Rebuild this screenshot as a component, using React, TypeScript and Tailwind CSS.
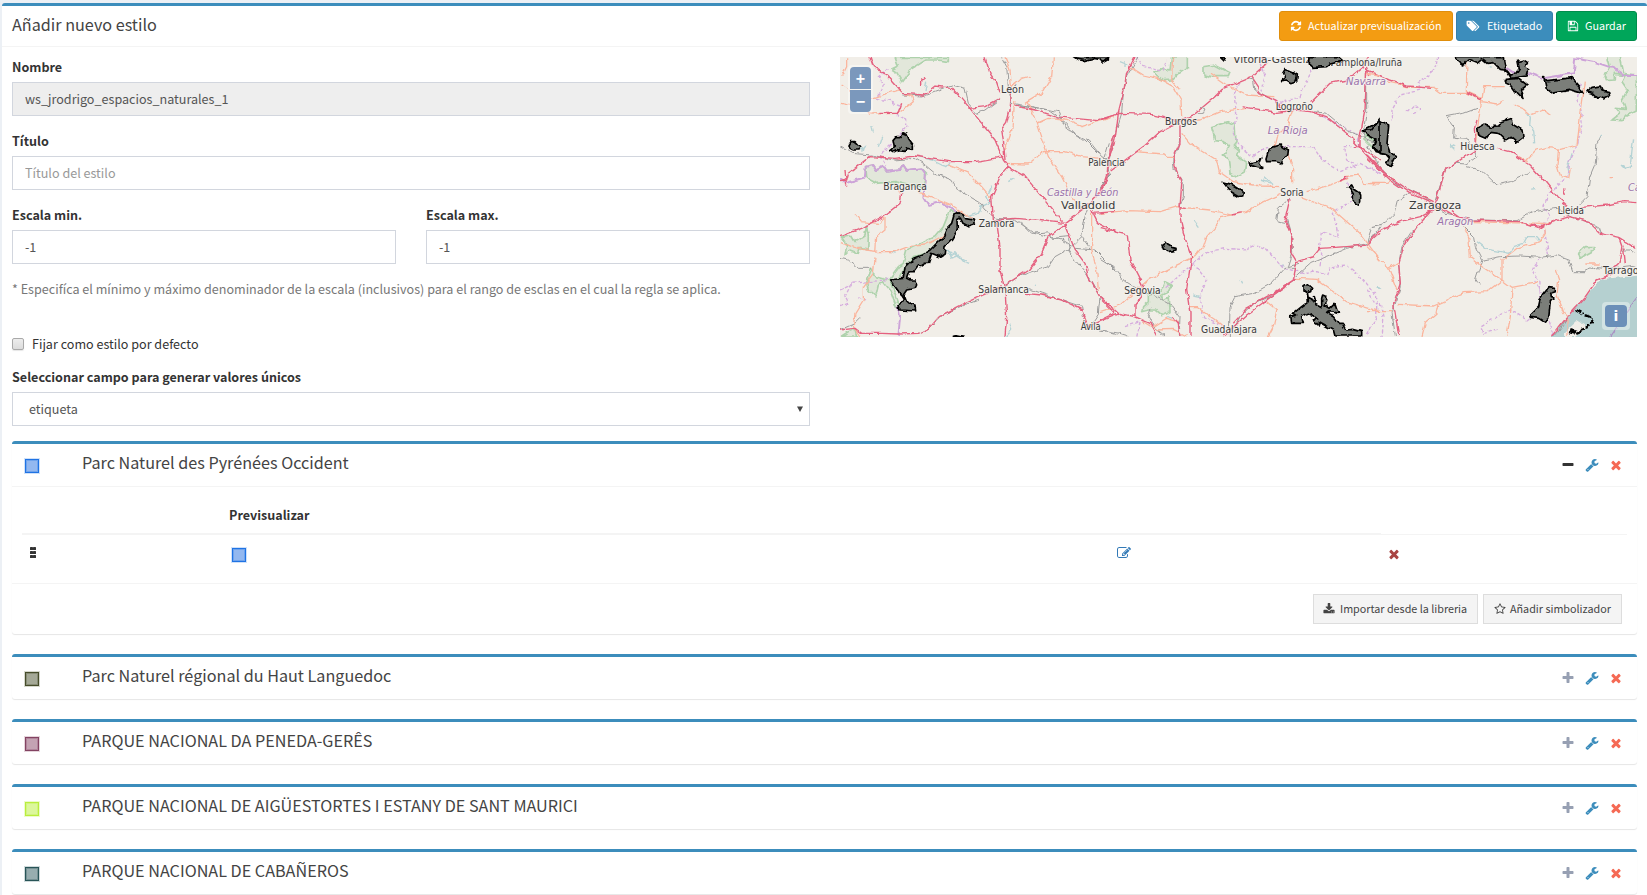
import React from "react";

const ICONS = {
  refresh:
    "M1639 1056q0 5-1 7-64 268-268 434.5t-478 166.5q-146 0-282.5-55t-243.5-157l-129 129q-19 19-45 19t-45-19-19-45v-448q0-26 19-45t45-19h448q26 0 45 19t19 45-19 45l-137 137q71 66 161 102t187 36q134 0 250-65t186-179q11-17 53-117 8-23 30-23h192q13 0 22.5 9.5t9.5 22.5zm25-800v448q0 26-19 45t-45 19h-448q-26 0-45-19t-19-45 19-45l138-138q-148-137-349-137-134 0-250 65t-186 179q-11 17-53 117-8 23-30 23h-199q-13 0-22.5-9.5t-9.5-22.5v-7q65-268 270-434.5t480-166.5q146 0 284 55.5t245 156.5l130-129q19-19 45-19t45 19 19 45z",
  tags: "M384 448q0-53-37.5-90.5t-90.5-37.5-90.5 37.5-37.5 90.5 37.5 90.5 90.5 37.5 90.5-37.5 37.5-90.5zm1067 576q0 53-37 90l-491 492q-39 37-91 37-53 0-90-37l-715-716q-38-37-64.5-101t-26.5-117v-416q0-52 38-90t90-38h416q53 0 117 26.5t102 64.5l715 714q37 39 37 91zm384 0q0 53-37 90l-491 492q-39 37-91 37-36 0-59-14t-53-45l470-470q37-37 37-90 0-52-37-91l-715-714q-38-38-102-64.5t-117-26.5h224q53 0 117 26.5t102 64.5l715 714q37 39 37 91z",
  floppy:
    "M512 1536h768v-384h-768v384zm896 0h128v-896q0-14-10-38.5t-20-34.5l-281-281q-10-10-34-20t-39-10v416q0 40-28 68t-68 28h-576q-40 0-68-28t-28-68v-416h-128v1280h128v-416q0-40 28-68t68-28h832q40 0 68 28t28 68v416zm-384-928v-320q0-13-9.5-22.5t-22.5-9.5h-192q-13 0-22.5 9.5t-9.5 22.5v320q0 13 9.5 22.5t22.5 9.5h192q13 0 22.5-9.5t9.5-22.5zm640 32v928q0 40-28 68t-68 28h-1344q-40 0-68-28t-28-68v-1344q0-40 28-68t68-28h928q40 0 88 20t76 48l280 280q28 28 48 76t20 88z",
  times:
    "M1490 1322q0 40-28 68l-136 136q-28 28-68 28t-68-28l-294-294-294 294q-28 28-68 28t-68-28l-136-136q-28-28-28-68t28-68l294-294-294-294q-28-28-28-68t28-68l136-136q28-28 68-28t68 28l294 294 294-294q28-28 68-28t68 28l136 136q28 28 28 68t-28 68l-294 294 294 294q28 28 28 68z",
  plus: "M1600 736v192q0 40-28 68t-68 28h-416v416q0 40-28 68t-68 28h-192q-40 0-68-28t-28-68v-416h-416q-40 0-68-28t-28-68v-192q0-40 28-68t68-28h416v-416q0-40 28-68t68-28h192q40 0 68 28t28 68v416h416q40 0 68 28t28 68z",
  minus: "M1600 736v192q0 40-28 68t-68 28h-1216q-40 0-68-28t-28-68v-192q0-40 28-68t68-28h1216q40 0 68 28t28 68z",
  wrench:
    "M448 1472q0-26-19-45t-45-19-45 19-19 45 19 45 45 19 45-19 19-45zm644-420l-682 682q-37 37-90 37-52 0-91-37l-106-108q-38-36-38-90 0-53 38-91l681-681q39 98 114.5 173.5t173.5 114.5zm634-435q0 39-23 106-47 134-164.5 217.5t-258.5 83.5q-185 0-316.5-131.5t-131.5-316.5 131.5-316.5 316.5-131.5q58 0 121.5 16.5t107.5 46.5q16 11 16 28t-16 28l-293 169v224l193 107q5-3 79-48.5t135.5-81 70.5-35.5q15 0 23.5 10t8.5 25z",
  edit: "M888 1184l116-116-152-152-116 116v56h96v96h56zm440-720q-16-16-33 1l-350 350q-17 17-1 33t33-1l350-350q17-17 1-33zm80 594v190q0 119-84.5 203.5t-203.5 84.5h-832q-119 0-203.5-84.5t-84.5-203.5v-832q0-119 84.5-203.5t203.5-84.5h832q63 0 117 25 15 7 18 23 3 17-9 29l-49 49q-14 14-32 8-23-6-45-6h-832q-66 0-113 47t-47 113v832q0 66 47 113t113 47h832q66 0 113-47t47-113v-126q0-13 9-22l64-64q15-15 35-7t20 29zm-96-738l288 288-672 672h-288v-288zm444 132l-92 92-288-288 92-92q28-28 68-28t68 28l152 152q28 28 28 68t-28 68z",
  download:
    "M1344 1344q0-26-19-45t-45-19-45 19-19 45 19 45 45 19 45-19 19-45zm256 0q0-26-19-45t-45-19-45 19-19 45 19 45 45 19 45-19 19-45zm128-224v320q0 40-28 68t-68 28h-1472q-40 0-68-28t-28-68v-320q0-40 28-68t68-28h465l135 136q58 56 136 56t136-56l136-136h464q40 0 68 28t28 68zm-325-569q17 41-14 70l-448 448q-18 19-45 19t-45-19l-448-448q-31-29-14-70 17-39 59-39h256v-448q0-26 19-45t45-19h256q26 0 45 19t19 45v448h256q42 0 59 39z",
  star: "M1201 1004l306-297-422-62-189-382-189 382-422 62 306 297-73 421 378-199 377 199zm527-357q0 22-26 48l-363 354 86 500q1 7 1 20 0 50-41 50-19 0-40-12l-449-236-449 236q-22 12-40 12-21 0-31.5-14.5t-10.5-35.5q0-6 2-20l86-500-364-354q-25-27-25-48 0-37 56-46l502-73 225-455q19-41 49-41t49 41l225 455 502 73q56 9 56 46z",
};

function Icon({ name, size = 14, className = "" }: { name: keyof typeof ICONS; size?: number; className?: string }) {
  return (
    <svg width={size} height={size} viewBox="0 0 1792 1792" fill="currentColor" className={"shrink-0 overflow-visible " + className}>
      <path d={ICONS[name]} />
    </svg>
  );
}

const RED = "#e5607f";
const ORANGE = "#fbb49c";
const GREY = "#9c9c9c";
const PURPLE = "#d6acde";

type Sheet = {
  dx: number;
  water?: string;
  green?: string;
  grey?: string;
  orange?: string;
  red?: string;
  dashed?: string;
  border?: string;
  parks?: string;
  labels: [string, number, number, number, number?][];
  regions: [string, number, number, number][];
};

const SHEETS: Sheet[] = [
  {
    dx: 527,
    water:
      "M482 190L490 205 488 225 500 240 503 280M765 345L775 355 790 350 795 300 800 265M330 575L360 598 400 605 425 610 440 590 470 580 480 560 510 560 520 572M605 375L600 350 610 330 615 310M365 50L372 52M250 285L262 298M252 295L265 287M490 418L504 416M30 710L42 718M695 265L705 255",
    green:
      "M718 18L760 18 770 70 808 75 808 180 780 195 765 212 735 210 760 190 748 175 775 178 765 150 782 120 765 95 775 75 745 70 745 90 718 92 710 70 728 55ZM635 610L655 590 680 590 682 600 655 615 640 625ZM0 255L20 270 30 290 10 285Z",
    grey:
      "M0 285L40 355 90 400 160 435 240 490 320 510 450 512 500 485 570 475 610 500 665 515 700 535 705 550M205 450L235 360 265 340 300 342 330 320 320 295 300 265 260 262 262 230 240 200 290 190 330 175M300 350L345 362 390 405 430 395 485 370M635 465L660 440 668 380 685 340 690 275 700 258M130 425L95 450 85 490 55 520 15 530 0 575M290 530L320 560 325 590 345 630 325 690 340 703M340 632L400 620 460 618 520 622 570 615 605 628 618 665 650 665 690 650 750 655 808 648M605 795L580 835 560 858M85 858L75 790 100 710 95 640 105 590 130 550 150 530M765 600L790 600 808 610",
    orange:
      "M60 95L130 112 200 112 225 130 300 130 345 150M300 18L298 125 345 145 335 210 325 285M345 150L350 110 410 110M345 155L390 162 410 152M440 165L470 178 490 195 530 180 550 195M480 330L510 300 540 292 580 298 630 285 640 200 655 95M575 295L570 345 580 380 605 385 610 355M455 320L485 335M320 515L420 518 530 520 560 515M530 525L535 550 520 575 450 595 405 630 405 690 435 712 500 700 510 690M290 530L305 560 310 620 345 650 405 690 360 725 290 728 200 768 95 763M215 765L210 790 175 820 165 858M435 715L430 800 420 858M0 400L60 400 80 385M0 590L65 655 95 635M65 655L90 720M0 785L80 785M565 660L575 690 570 735 590 790 600 800 600 858M725 380L735 380M655 642L695 642",
    red:
      "M0 60L70 90 120 108 195 115M300 128L345 150M330 210L322 240 325 280M0 315L60 375 125 420 200 455M0 325L70 390 125 428 200 462M205 460L235 360 270 335 325 300M390 295L430 305 490 345 530 390 570 440 605 470M645 472L720 465 770 455 808 458M205 462L260 495 310 510 460 515 520 530 590 505 610 500 665 515 700 550 755 562 808 595M205 475L160 500 100 515 40 540 0 580M190 485L150 530 110 590 95 640 100 700 80 760 95 858M755 562L765 590 755 640 740 655M740 670L690 690 655 740 605 795 555 858M460 515L520 535 560 510M770 595L775 640M590 415L595 435M255 482L280 500M0 55L5 75",
    dashed:
      "M215 18L210 50 155 100 160 120 100 135 75 180 72 215M120 185L140 165 160 180 135 190M640 100L630 150 645 180 645 220 630 290 605 340 600 380 560 420 545 430 530 470 550 500 530 520 545 620M520 625L495 655 515 690 520 735 540 790 560 858M500 795L480 810 430 780 400 795 340 830 350 850 390 840M0 350L30 370 50 360M0 720L20 760 40 760 50 810 45 858M500 690L530 740",
    border: "M410 50L450 75 490 70 530 85 620 70 625 25 680 35 740 55 770 75 808 75",
    parks:
      "M265 20L275 35 290 45 305 30 330 40 345 28 360 40 380 38 400 58 415 60 430 85 455 82 480 78 485 60 475 50 482 38 470 30 450 35 455 58 445 72 430 75 415 55 408 20ZM415 88L455 85 480 105 468 115 460 118 468 148 450 130 435 108 418 100ZM530 80L540 92 600 85 612 83 640 115 648 130 605 118 565 125 550 128 538 118 535 100ZM660 125L675 112 700 108 705 120 725 125 728 140 712 147 700 142 690 145 675 130ZM0 240L12 250 35 230 18 290 28 305 55 310 68 325 58 340 70 352 88 318 72 310 60 280 65 225 37 210 28 220 0 235ZM332 235L355 222 370 230 395 228 405 215 435 205 440 225 465 240 468 262 448 277 430 262 415 270 395 250 370 247 358 265 335 255ZM520 745L545 713 562 715 562 725 548 730 550 740 562 742 550 755 545 805 530 815 515 805 490 802 488 795 515 768Z",
    labels: [
      ["Huesca", 280, 300, 103],
      ["Zaragoza", 126, 478, 157, 34],
      ["Lleida", 572, 492, 79],
      ["Tarrago", 708, 673, 107],
    ],
    regions: [
      ["Aragón", 211, 524, 108],
      ["Ca", 783, 423, 38],
    ],
  },
  {
    dx: 260,
    water:
      "M60 35L85 45M75 30L75 48M480 390L515 400 495 380 490 395M280 510L295 530M280 735L300 740M200 800L220 805M830 710L838 715M540 645L550 650M420 690L425 700",
    green:
      "M162 65L190 55 210 60 215 18 262 18 262 50 235 70 215 90 190 92 175 80ZM312 50L345 45 390 68 385 80 330 80 312 75ZM335 230L385 215 405 225 408 275 400 285 418 300 412 318 440 340 435 370 410 382 390 370 385 325 370 315 385 290 370 275 345 272ZM165 730L185 720 195 695 215 705 205 725 185 735 190 750 208 740 210 785 185 797 165 780 145 780 125 785 128 770 145 755 145 735ZM795 255L825 275 820 295 795 270Z",
    grey:
      "M115 18L80 80 70 130 65 190 40 270 25 340 30 370 0 415M240 260L235 300 218 325 222 355 250 400 250 440 240 470M440 85L460 90 465 120 510 145M640 185L680 190 740 240 840 285M570 445L535 475 530 515 555 520M0 625L40 650 70 690 110 715 180 745 215 765 240 800 238 858M585 655L555 655 515 700 460 730 405 740 390 770 388 858M585 690L520 735 450 770 420 800 400 840M585 680L630 640 680 620 740 595 800 580 825 550 840 530M560 510L575 560 578 610 565 650 600 640M290 190L310 190 315 180 300 172M155 770L145 800 160 830 195 858M0 840L60 850 85 858M790 260L800 200 800 110M0 405L35 370",
    orange:
      "M90 50L130 75 175 85 220 110 243 150 245 200M218 18L215 90 240 120M330 70L380 105 440 135 520 140M245 212L300 210 360 185 440 175M245 250L270 280 350 330 358 365 400 395 480 408 545 410M578 180L565 220 560 250M525 290L535 250 560 230M560 305L578 350 578 400M620 425L680 408 745 385M600 440L700 480 780 550 840 630M110 305L190 312 200 322 225 322M0 490L80 482 180 485 230 470 330 480 395 495 435 488 490 455 545 430M395 495L360 500 355 520 320 560 310 590 285 620 220 650 150 685 60 765M60 765L0 785M590 685L650 688 700 725 740 755 840 785M270 770L290 770 330 800 345 810 370 830M500 755L530 780 520 830 505 858M735 380L775 375 790 400 840 402M130 815L170 840 220 838 260 858M160 830L200 805 235 815M800 70L840 75",
    red:
      "M0 208L60 190 150 193 235 212 280 195 340 145 370 115 455 80 500 40 480 18M105 20L80 70 70 130 55 190 45 270 25 330 20 390 0 420M240 215L240 280 222 320 225 350 245 400 240 470 240 500 250 550 275 620 260 720 270 790 270 858M240 215L180 245 130 290 90 320 35 360M455 80L475 110 470 125 530 155 545 185M425 170L530 187 590 180 630 185 680 200 740 250 840 360M635 155L690 100 740 90 790 50 810 18M800 50L795 180 780 260 780 290 840 330M0 535L40 545 82 555 90 630 130 710 125 740 105 765 105 800 55 790 0 740M0 815L60 790 105 800 150 820 170 858M570 445L555 510 575 560 575 610 590 635 640 620 660 595 740 590 800 585 840 550M590 635L580 690 520 730 440 775 400 820M590 685L500 750 440 795 370 858M395 495L425 488M235 470L260 472M720 393L740 385 740 378M220 800L235 820 240 858M765 290L785 290",
    dashed:
      "M110 20L130 50 190 60 200 30M480 40L495 80 480 130 540 160 600 140 620 95 640 50M420 95L400 130 410 190 400 250 420 290 460 320 500 290 580 290 640 290 665 330 720 365 780 340 840 370M670 200L770 250 780 290 730 290 740 330 770 350M740 395L760 450 700 490 715 560 665 545 655 590 665 610 660 650M280 640L320 605 380 595 440 600 460 585 500 600 550 655 620 670 650 665 680 675 690 650 740 645 780 680 830 740 830 800 800 858M280 640L320 690 300 740 310 800 370 830M75 830L120 815 110 858M200 710L280 640",
    parks:
      "M0 20L25 20 25 30 10 38 0 32ZM362 20L378 20 372 30ZM548 70L555 58 580 68 592 75 590 92 572 98 560 90 542 92 555 82ZM630 20L718 20 720 35 690 42 680 50 640 52 628 42ZM498 328L508 295 540 285 550 293 562 298 560 315 545 340 530 335 500 335ZM448 340L470 335 485 322 478 340 488 355 470 352 452 345ZM370 396L395 403 415 415 430 430 428 438 415 440 390 425 380 410ZM744 410L752 405 760 420 782 435 782 455 775 465 760 455 760 435ZM186 585L195 580 215 592 228 595 228 600 205 605 190 597ZM790 240L815 240 840 205 840 310 820 290 828 270 800 255ZM612 710L625 703 635 712 632 725 622 728 625 745 645 755 640 740 645 760 665 770 665 745 668 735 680 740 680 755 675 765 690 775 705 760 710 775 715 790 690 785 680 790 700 800 715 820 730 820 740 840 760 838 785 845 785 858 705 858 700 840 655 815 655 825 640 815 650 805 625 790 605 800 610 820 575 820 572 800 590 795 580 790 605 770 625 755 622 728 612 720Z",
    labels: [
      ["Vitoria-Gasteiz", 400, 38, 233, 33],
      ["Pamplona/Iruña", 692, 48, 214],
      ["Logroño", 527, 180, 112],
      ["Burgos", 195, 224, 96],
      ["Palencia", -35, 347, 109],
      ["Soria", 541, 437, 70],
      ["Segovia", 73, 733, 109],
      ["Guadalajara", 303, 848, 168],
    ],
    regions: [
      ["Navarra", 738, 104, 120],
      ["La Rioja", 503, 251, 120],
    ],
  },
  {
    dx: -5,
    water:
      "M250 320L290 330 320 345 335 350 345 340M330 600L350 605 370 620 390 630M335 610L355 625M340 600L345 615 360 605 385 635 400 640M345 625L375 615M470 410L455 440 470 455 440 470 430 490 400 500M515 858L530 840 525 820M170 605L182 610M110 225L115 245M75 300L90 285M520 395L535 385M270 120L275 95M80 305L85 290M385 490L410 505M600 705L606 708M130 290L140 260",
    green:
      "M180 22L340 22 340 35 310 30 270 30 230 55 200 95 185 70 170 60 190 50ZM92 350L115 345 125 360 145 350 155 365 195 360 205 345 215 360 260 355 275 370 268 395 265 410 220 405 180 395 125 400 95 385ZM345 480L370 490 355 525 325 560 300 600 270 610 235 620 210 650 190 690 165 690 195 770 185 775 165 720 145 695 130 705 122 740 100 720 95 695 110 655 122 680 160 690 190 650 205 640 215 600 260 580 300 560 325 530ZM20 562L50 558 60 575 90 555 95 525 100 560 98 600 75 595 70 610 45 600 30 615 35 585ZM40 845L60 838 65 858 20 858Z",
    grey:
      "M500 22L515 50 520 110 530 160 590 170 640 180 680 210 720 250 760 270 800 320 838 340M545 165L620 175 670 185 690 230 750 270 790 310M205 135L260 138 350 105 390 115 400 160 425 190 450 180 490 150M15 290L50 310 110 315 175 330 240 325 270 345 300 370 350 390 370 420 430 455 450 480 485 505 540 510 600 550 680 570 720 595 780 600 840 660M555 515L590 550 645 545 650 565 700 560 705 595 660 620 640 650 590 665 550 680 510 708M580 715L620 730 680 750 740 770 745 800M760 470L750 500 740 560 700 600 720 630 765 685 795 740 790 790 770 820M740 560L765 595M15 625L40 630 70 655 110 655M75 805L60 820 15 840M250 850L280 835 320 795 390 765 430 750M390 15L385 18M800 840L840 850M820 280L805 330 830 320",
    orange:
      "M35 25L35 50 20 80M20 105L60 135 110 145 190 120 230 140 235 155 190 190 100 192 90 175 15 160M655 22L650 80 620 130 570 160M530 110L550 95 560 85 585 78M575 155L600 200 620 260 640 320 680 380 710 440 745 480M605 220L640 205 690 210 740 230 770 220 840 200M510 340L580 342 625 305 690 305 740 320 800 325M340 345L400 370 440 410 470 445M250 430L290 440 350 465 410 505M60 490L80 515 130 520 150 500M150 500L150 540 125 560 122 608M15 575L50 590 90 600 130 605 180 605 220 590 270 585 320 560 340 540M120 625L115 670 85 710 85 750 60 790 55 830 75 858M195 430L180 400M770 490L770 600 785 660 790 720M540 150L530 240 510 300M500 715L530 720M510 22L525 60 530 120",
    red:
      "M105 20L115 50 160 80 205 130 265 135 300 108 350 115 375 140 405 175 440 220 480 270 505 330 520 350 570 380 620 440 680 515M450 22L465 70 485 100 495 130M530 120L525 180 515 220 500 240 505 270 510 330M400 175L450 170 495 145M540 168L600 180 660 200 790 212 840 195M15 395L35 390 40 370 105 320 180 325 240 318 340 335 420 335 505 320M520 350L495 380 470 440 475 510M475 510L540 505 600 510 690 520 740 480 800 420 825 345 825 300 840 250M485 515L495 590 495 660 510 720 515 800 510 858M15 560L80 535 150 495 195 460 200 430M75 850L140 850 190 852 250 850 280 835 310 800 400 755 500 710M510 705L580 660 620 610 640 560 690 525 720 600 750 640 760 680 800 750 840 790M570 730L620 735 680 750 740 780 760 830 840 790M770 480L790 520 840 545M770 490L840 485M15 840L60 835 80 850M200 160L190 190 130 190M260 108L260 90 272 85M30 360L35 410",
    dashed:
      "M160 55L130 80 145 105 125 145 165 155 195 165 190 195 215 210 215 230 180 270 150 300 135 320 155 350M15 770L40 760 30 740 50 700 100 695 150 690 160 685M15 720L60 700M70 740L90 750",
    border:
      "M15 385L30 400 90 382 92 350 115 345 125 360 145 350 155 365 195 360 205 345 215 360 260 355 272 372 272 400 265 440 280 465 320 455 350 475 370 490M190 770L195 800 190 858",
    parks:
      "M42 285L48 275 60 275 74 290 72 300 55 300 45 295ZM165 298L178 288 174 272 185 260 198 260 204 248 216 253 222 268 235 285 235 298 215 295 210 307 190 305 195 295 178 305ZM358 492L372 485 385 492 392 506 415 510 418 522 400 528 384 520 376 504 366 510 367 540 350 570 330 590 328 612 315 620 290 610 280 640 270 640 255 650 250 645 235 665 222 665 215 685 225 690 240 690 245 705 240 715 215 720 205 735 210 748 225 762 240 768 242 783 195 780 192 768 205 745 195 730 165 690 205 685 210 650 235 625 260 615 285 600 305 580 315 570 325 560 335 535 350 520ZM718 20L822 20 805 38 790 28 775 25 750 32 730 28ZM355 862L370 858 388 862Z",
    labels: [
      ["León", 498, 130, 69],
      ["Bragança", 145, 421, 131],
      ["Zamora", 431, 531, 107],
      ["Valladolid", 678, 478, 163, 34],
      ["Salamanca", 430, 728, 152],
      ["Ávila", 737, 840, 60],
    ],
    regions: [["Castilla y León", 636, 438, 214]],
  },
];

function MapPreview() {
  return (
    <div className="relative h-[280px] w-[797px] overflow-hidden bg-[#f1eee8]">
      <svg width="797" height="280" viewBox="0 0 797 280" className="block" fill="none" strokeLinejoin="round">
        <defs>
          <filter id="wobble" filterUnits="userSpaceOnUse" x="-10" y="-10" width="817" height="300" colorInterpolationFilters="sRGB">
            <feTurbulence type="fractalNoise" baseFrequency="0.13" numOctaves="2" seed="4" />
            <feDisplacementMap in="SourceGraphic" scale="5" xChannelSelector="R" yChannelSelector="G" />
          </filter>
        </defs>
        <g filter="url(#wobble)">
          <path d="M805 218L762 222 747 238 729 257 705 288H805Z" fill="#b5d0d0" />
          <path d="M724 276L737 264 747 270 735 280H724Z" fill="#f1eee8" />
          <path d="M770 280L797 240" stroke="#a98fc4" strokeWidth="1.3" />
          {SHEETS.map((s) => (
            <g key={s.dx} transform={`translate(${s.dx} -7) scale(0.333333)`}>
              <path d={s.water} stroke="#b5d3d5" strokeWidth="4" />
              <path d={s.green} fill="#e2e7da" stroke="#aed2ac" strokeWidth="5" />
              <path d={s.dashed} stroke={PURPLE} strokeWidth="4" strokeDasharray="10 6" />
              <path d={s.border} stroke="#cda3d8" strokeWidth="6" />
              <path d={s.grey} stroke={GREY} strokeWidth="3" />
              <path d={s.orange} stroke={ORANGE} strokeWidth="3.8" />
              <path d={s.red} stroke={RED} strokeWidth="4.2" />
            </g>
          ))}
        </g>
        {SHEETS.map((s) => (
          <g
            key={s.dx}
            transform={`translate(${s.dx} -7) scale(0.333333)`}
            stroke="#f6f4f0"
            strokeOpacity="0.75"
            strokeWidth="6"
            paintOrder="stroke"
            fontFamily="'DejaVu Sans', sans-serif"
          >
            {s.labels.map(([t, x, y, w, size]) => (
              <text key={t} x={x} y={y} fontSize={size ?? 29} textLength={w} lengthAdjust="spacingAndGlyphs" fill="#3a3a3a">
                {t}
              </text>
            ))}
            {s.regions.map(([t, x, y, w]) => (
              <text key={t} x={x} y={y} fontSize="32" fontStyle="italic" textLength={w} lengthAdjust="spacingAndGlyphs" fill="#9b72ab">
                {t}
              </text>
            ))}
          </g>
        ))}
        <g filter="url(#wobble)">
          {SHEETS.map((s) => (
            <g key={s.dx} transform={`translate(${s.dx} -7) scale(0.333333)`}>
              <path d={s.parks} fill="#7b7e79" stroke="#000" strokeWidth="5" />
            </g>
          ))}
          <path
            d="M736 253L742 256 743 258M745 258L750 260 753 264 748 270 740 273M736 275L730 273M729 275L736 277 743 274"
            stroke="#000"
            strokeWidth="2.4"
            strokeDasharray="6 1.5"
          />
        </g>
      </svg>
      <div className="absolute top-2 left-2 flex flex-col gap-px rounded bg-white/40 p-[2px]">
        {["+", "−"].map((c) => (
          <button
            key={c}
            className="flex h-[22px] w-[21px] items-center justify-center bg-[#7b98bc] pt-[2px] font-['Liberation_Sans'] text-[16px] leading-none font-bold text-white first:rounded-t-sm last:rounded-b-sm"
          >
            {c}
          </button>
        ))}
      </div>
      <div className="absolute right-[7px] bottom-[7px] rounded bg-white/40 p-[3px]">
        <button className="flex h-[22px] w-[22px] items-center justify-center rounded-sm bg-[#6b8fb8] font-['DejaVu_Sans'] text-[14px] leading-none font-bold text-white">
          i
        </button>
      </div>
    </div>
  );
}

function Swatch({ fill, line, halo }: { fill: string; line: string; halo: string }) {
  return (
    <svg width="16" height="16" viewBox="0 0 16 16" className="shrink-0">
      <rect x="0.5" y="0.5" width="15" height="15" fill="none" stroke={halo} />
      <rect x="1.5" y="1.5" width="13" height="13" fill={fill} stroke={line} />
      <rect x="2.5" y="2.5" width="11" height="11" fill="none" stroke={line} strokeOpacity="0.3" />
    </svg>
  );
}

const BLUE = { fill: "#93b8f0", line: "#1f73e4", halo: "#cfe1f9" };

const RULES = [
  { title: "Parc Naturel des Pyrénées Occident", colors: BLUE, open: true },
  { title: "Parc Naturel régional du Haut Languedoc", colors: { fill: "#a5a997", line: "#464c2a", halo: "#d6d8cd" } },
  { title: "PARQUE NACIONAL DA PENEDA-GERÊS", colors: { fill: "#c4a3b3", line: "#834362", halo: "#e5d5dc" } },
  { title: "PARQUE NACIONAL DE AIGÜESTORTES I ESTANY DE SANT MAURICI", colors: { fill: "#dcf79c", line: "#b9ee3c", halo: "#edfbcb" } },
  { title: "PARQUE NACIONAL DE CABAÑEROS", colors: { fill: "#97adaf", line: "#285457", halo: "#cfdadb" } },
];

function RuleHeader({ title, colors, open }: { title: string; colors: typeof BLUE; open?: boolean }) {
  return (
    <div className="flex h-[42px] items-start">
      <div className="w-[70px] pt-[14px] pl-3">
        <Swatch {...colors} />
      </div>
      <h3 className="grow pt-2 text-[16.18px] leading-5 text-[#444]">{title}</h3>
      <div className="flex pt-[14px] pr-[14px]">
        <Icon name={open ? "minus" : "plus"} className={open ? "mr-[10px] text-[#333]" : "mr-[10px] text-[#97a0b3]"} />
        <Icon name="wrench" className="mr-[10px] text-[#3c8dbc]" />
        <Icon name="times" className="text-[#f56954]" />
      </div>
    </div>
  );
}

function SymbolizerTable() {
  return (
    <>
      <div className="border-t border-[#f4f4f4] px-[10px] pt-[10px] pb-[22px]">
        <div className="flex h-[36px] pt-2">
          <div className="w-[207px]" />
          <div className="text-[12.57px] leading-5 font-bold text-[#333]">Previsualizar</div>
        </div>
        <div className="flex h-[28px]">
          <div className="flex w-[1359px] border-t-2 border-[#f4f4f4]">
            <div className="flex w-[209px] flex-col gap-px pt-3 pl-2">
              {[0, 1, 2].map((i) => (
                <div key={i} className="flex">
                  <span className="h-[3px] w-[3px] rounded-[0.5px] bg-[#333]" />
                  <span className="h-[3px] w-[3px] rounded-[0.5px] bg-[#333]" />
                </div>
              ))}
            </div>
            <div className="w-[886px] pt-3">
              <Swatch {...BLUE} />
            </div>
            <Icon name="edit" className="mt-[11px] text-[#337ab7]" />
          </div>
          <div className="mt-px grow border-t border-[#f4f4f4] pt-3 pl-[6px]">
            <Icon name="times" className="text-[#a94442]" />
          </div>
        </div>
      </div>
      <div className="flex h-[51px] justify-end gap-[5px] border-t border-[#f4f4f4] pt-[10px] pr-[15px]">
        <button className="flex h-[30px] w-[165px] items-center border border-[#ddd] bg-[#f4f4f4] pl-[9px] text-[10.77px] text-[#444]">
          <Icon name="download" size={12} className="mr-[5px]" />
          Importar desde la libreria
        </button>
        <button className="flex h-[30px] w-[139px] items-center border border-[#ddd] bg-[#f4f4f4] pl-[10px] text-[10.77px] text-[#444]">
          <Icon name="star" size={12} className="mr-1" />
          Añadir simbolizador
        </button>
      </div>
    </>
  );
}

function Field({ label, children }: { label: string; children: React.ReactNode }) {
  return (
    <div className="flex grow basis-0 flex-col">
      <label className="mb-[5px] h-5 text-[12.57px] leading-5 font-bold text-[#333]">{label}</label>
      {children}
    </div>
  );
}

const INPUT =
  "h-[34px] w-full rounded-none border border-[#d2d6de] px-3 pb-[2px] text-[12.58px] leading-5 text-[#555] outline-none placeholder:text-[#999] placeholder:opacity-100";

export default function App() {
  return (
    <div className="h-[895px] w-[1647px] overflow-hidden bg-[#ecf0f5] pt-[3px] pl-[2px] font-['Noto_Sans_CJK_SC',sans-serif] text-[12.58px] leading-5 text-[#333]">
      <main className="h-[900px] rounded-[3px] border-t-[3px] border-[#3c8dbc] bg-white">
        <header className="flex h-[41px] items-start justify-between border-b border-[#f4f4f4] pr-[10px] pl-[10px]">
          <h1 className="pt-2 text-[16.18px] leading-5 text-[#444]">Añadir nuevo estilo</h1>
          <div className="flex gap-[3px] pt-[5px] text-[10.77px] text-white">
            <button className="flex h-[30px] w-[174px] items-center rounded-[3px] border border-[#e08e0b] bg-[#f39c12] pl-[10px]">
              <Icon name="refresh" size={12} className="mr-[6px]" />
              Actualizar previsualización
            </button>
            <button className="flex h-[30px] w-[97px] items-center rounded-[3px] border border-[#367fa9] bg-[#3c8dbc] pl-[10px]">
              <Icon name="tags" size={12} className="mr-[8px]" />
              Etiquetado
            </button>
            <button className="flex h-[30px] w-[81px] items-center rounded-[3px] border border-[#008d4c] bg-[#00a65a] pl-[10px]">
              <Icon name="floppy" size={12} className="mr-[6px]" />
              Guardar
            </button>
          </div>
        </header>
        <div className="px-[10px] pt-[10px]">
          <div className="flex gap-[30px]">
            <div className="flex h-[384px] w-[798px] flex-col">
              <div className="mb-[15px] flex">
                <Field label="Nombre">
                  <input className={INPUT + " bg-[#eee]"} defaultValue="ws_jrodrigo_espacios_naturales_1" />
                </Field>
              </div>
              <div className="mb-[15px] flex">
                <Field label="Título">
                  <input className={INPUT} placeholder="Título del estilo" />
                </Field>
              </div>
              <div className="mb-[15px] flex gap-[30px]">
                <Field label="Escala min.">
                  <input className={INPUT} defaultValue="-1" />
                </Field>
                <Field label="Escala max.">
                  <input className={INPUT} defaultValue="-1" />
                </Field>
              </div>
              <p className="h-[55px] leading-5 whitespace-nowrap text-[#777]">
                * Especifíca el mínimo y máximo denominador de la escala (inclusivos) para el rango de esclas en el cual la regla se aplica.
              </p>
              <label className="mb-[13px] flex h-5 items-center">
                <span className="mr-2 h-3 w-3 rounded-[2px] border border-[#a9a9a9] bg-linear-to-b from-[#ededed] to-[#dcdcdc] shadow-[0_1px_1px_rgba(0,0,0,0.1)]" />
                Fijar como estilo por defecto
              </label>
              <div className="flex">
                <Field label="Seleccionar campo para generar valores únicos">
                  <div className="flex h-[34px] items-center justify-between border border-[#d2d6de] pr-[6px] pl-4 text-[#555]">
                    etiqueta
                    <svg width="6" height="6" viewBox="0 0 6 6">
                      <path d="M0 0.5H6L3 6Z" fill="#444" />
                    </svg>
                  </div>
                </Field>
              </div>
            </div>
            <MapPreview />
          </div>
          <div className="flex flex-col gap-5">
            {RULES.map((r) => (
              <section key={r.title} className="rounded-[3px] border-t-[3px] border-[#3c8dbc] bg-white shadow-[0_1px_1px_rgba(0,0,0,0.1)]">
                <RuleHeader {...r} />
                {r.open && <SymbolizerTable />}
              </section>
            ))}
          </div>
        </div>
      </main>
    </div>
  );
}
